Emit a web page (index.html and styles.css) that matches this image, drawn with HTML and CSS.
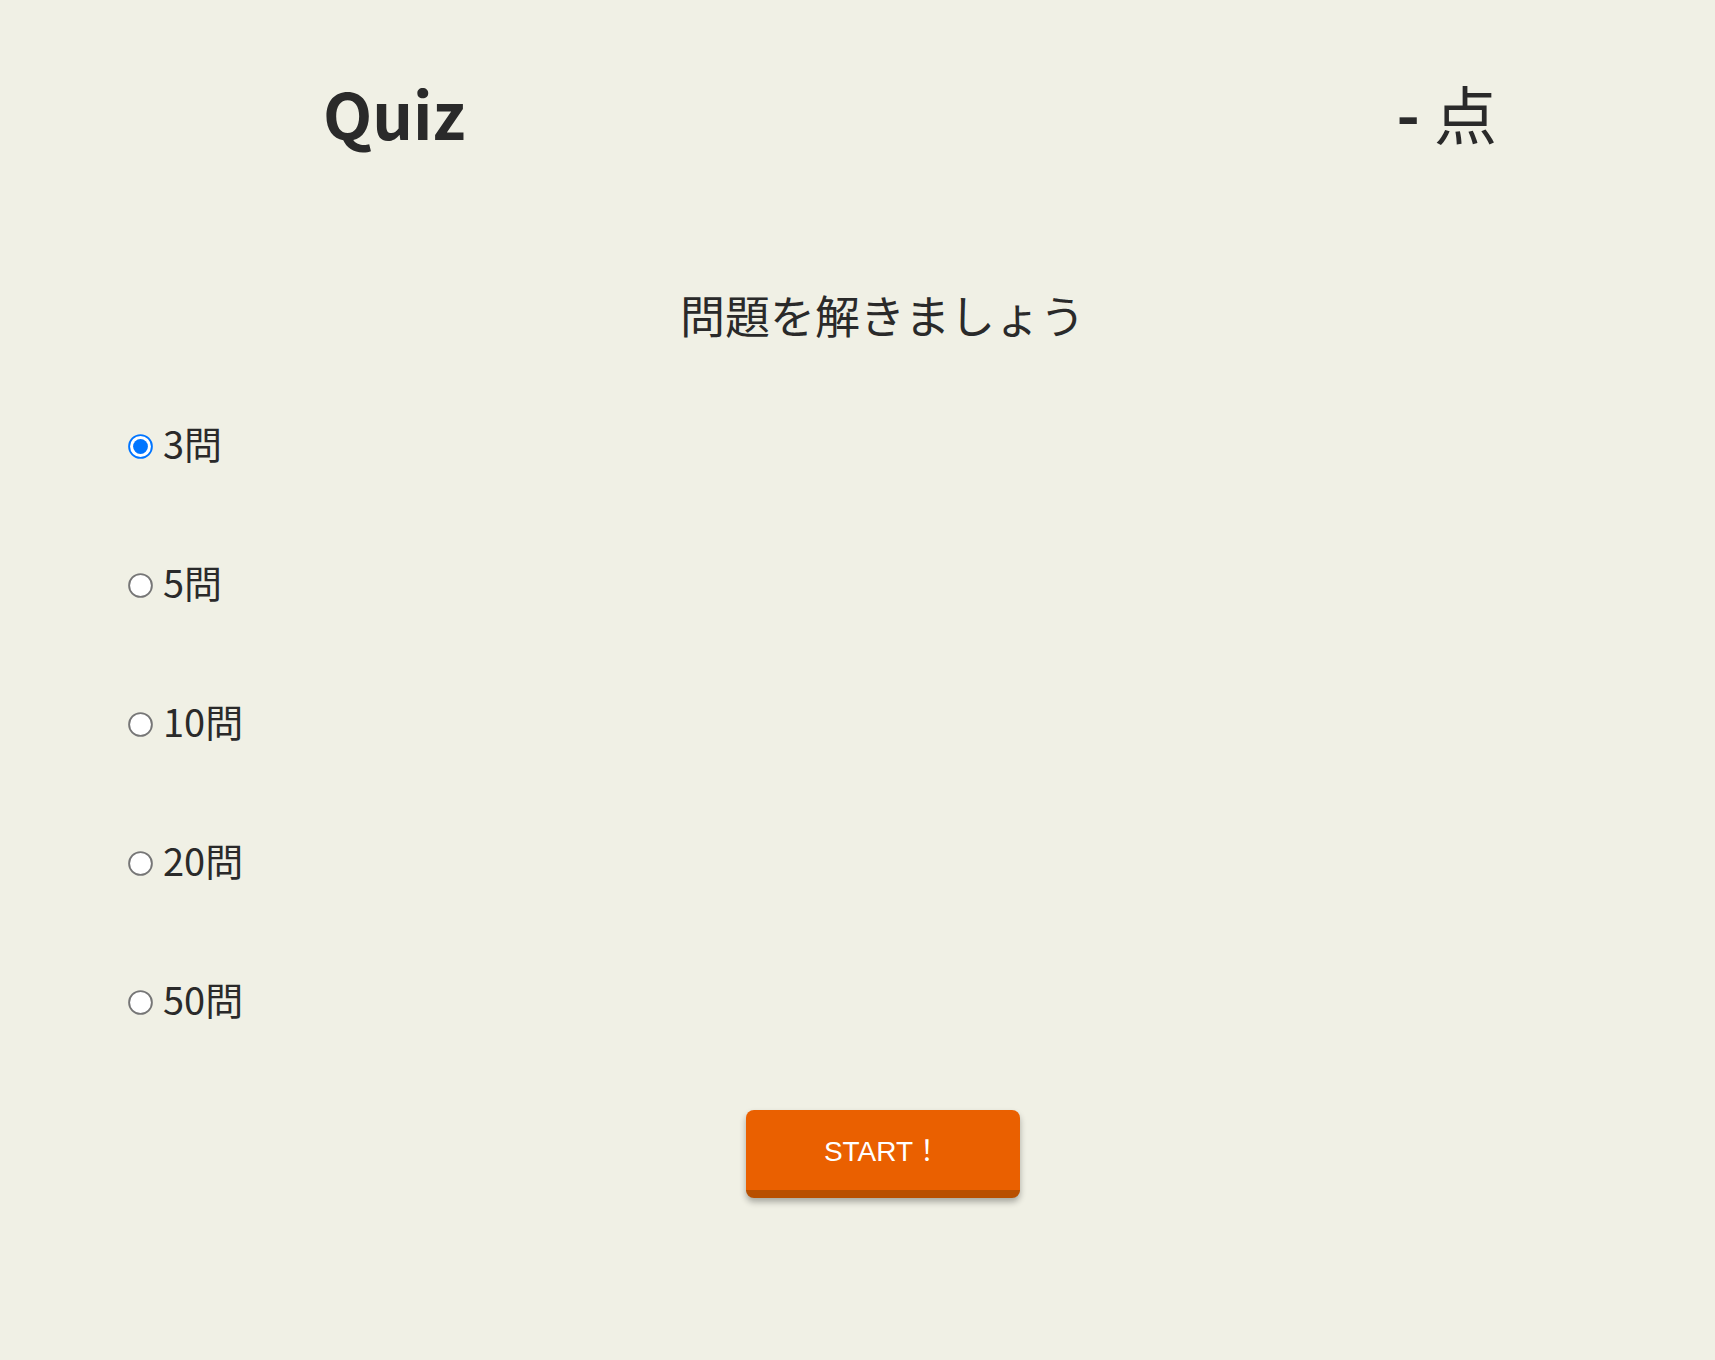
FILE: index.html
```html
<!DOCTYPE html>
<html lang="ja">
<head>
<meta charset="utf-8">
<title>Quiz</title>
<link rel="stylesheet" href="styles.css">
</head>
<body>
<header class="header">
  <h1 class="logo">Quiz</h1>
  <div class="score"><span class="score-value">-</span> 点</div>
</header>
<main class="main">
  <h2 class="title">問題を解きましょう</h2>
  <div class="options">
    <label class="option"><input type="radio" name="count" value="3" checked><span>3問</span></label>
    <label class="option"><input type="radio" name="count" value="5"><span>5問</span></label>
    <label class="option"><input type="radio" name="count" value="10"><span>10問</span></label>
    <label class="option"><input type="radio" name="count" value="20"><span>20問</span></label>
    <label class="option"><input type="radio" name="count" value="50"><span>50問</span></label>
  </div>
  <div class="actions">
    <button class="start" type="button">START！</button>
  </div>
</main>
</body>
</html>
```
FILE: styles.css
```css
html, body {
  margin: 0;
  padding: 0;
}
body {
  background: #f0f0e5;
  color: #2a2a2a;
  font-family: "Noto Sans CJK JP", "Noto Sans", sans-serif;
  min-height: 1360px;
}
.header {
  display: flex;
  justify-content: space-between;
  align-items: flex-start;
  padding: 66px 218px 0 323px;
}
.logo {
  margin: 0;
  font-size: 64px;
  line-height: 92px;
  font-weight: 700;
}
.score {
  font-size: 63px;
  line-height: 92px;
  font-weight: 400;
}
.score-value {
  font-weight: 700;
}
.main {
  padding: 0 78px 0 128px;
}
.title {
  margin: 125px 0 0;
  text-align: center;
  font-size: 45px;
  line-height: 64px;
  font-weight: 400;
}
.options {
  display: flex;
  flex-direction: column;
  gap: 83px;
  margin-top: 71px;
}
.option {
  display: flex;
  align-items: center;
  height: 56px;
  font-size: 38px;
  line-height: 56px;
}
.option input {
  width: 13px;
  height: 13px;
  margin: 0 16px 0 6px;
  transform: scale(1.9);
}
.option span {
  position: relative;
  top: -3px;
}
.actions {
  display: flex;
  justify-content: center;
  margin-top: 80px;
}
.start {
  width: 274px;
  height: 88px;
  border: none;
  border-bottom: 8px solid #b84f00;
  border-radius: 8px;
  background: #ea6000;
  color: #ffffff;
  font-family: "Liberation Sans", "Noto Sans CJK JP", sans-serif;
  font-size: 28px;
  box-shadow: 0 4px 6px rgba(0, 0, 0, 0.3);
  padding: 0 0 2px;
  cursor: pointer;
}
```
